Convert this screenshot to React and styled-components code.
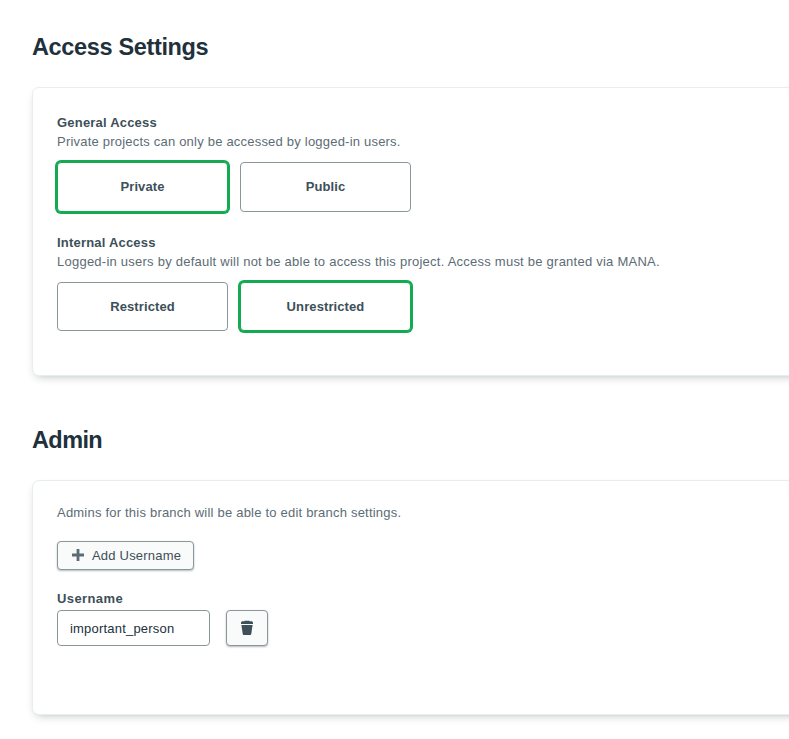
import React from "react";
import styled, { createGlobalStyle } from "styled-components";

const GlobalStyle = createGlobalStyle`
  * { box-sizing: border-box; }
  body {
    margin: 0;
    background: #fff;
    overflow: hidden;
    font-family: "Liberation Sans", Arial, sans-serif;
    font-size: 13px;
    color: #5c6c75;
  }
`;

const Page = styled.main`
  display: flex;
  flex-direction: column;
  height: 739px;
  padding: 32px 0 0 32px;
  overflow: hidden;
`;

const Title = styled.h2`
  margin: 0 0 25px;
  font-size: 23.5px;
  line-height: 30px;
  font-weight: 700;
  letter-spacing: ${(p) => p.$track || 0}px;
  color: #21313c;
  white-space: nowrap;
`;

const Card = styled.section`
  height: ${(p) => p.$height}px;
  flex: none;
  margin: 0 -24px ${(p) => p.$gap || 0}px 0;
  padding: 24px;
  padding-top: ${(p) => p.$top || 24}px;
  border: 1px solid #e7eeec;
  border-radius: 7px;
  background: #fff;
  box-shadow: 0 4px 10px -4px rgba(6, 22, 33, 0.3);
`;

const Label = styled.div`
  line-height: 20px;
  font-weight: 700;
  letter-spacing: ${(p) => p.$track || 0.2}px;
  color: #3d4f58;
`;

const Description = styled.p`
  margin: 0;
  line-height: 18px;
  letter-spacing: ${(p) => p.$track || 0.21}px;
  white-space: nowrap;
`;

const Options = styled.div`
  display: flex;
  gap: 12px;
  margin: 11px 0 21px;
`;

const Option = styled.button`
  width: 171px;
  height: ${(p) => p.$height}px;
  padding: 0 0 1px;
  border: 1px solid #89979b;
  border-radius: 4px;
  background: #fff;
  font: 700 13px "Liberation Sans", Arial, sans-serif;
  letter-spacing: 0.1px;
  color: #3d4f58;
  ${(p) => p.$selected && `
    border-color: #13aa52;
    box-shadow: 0 0 0 2px #13aa52;
  `}
`;

const Button = styled.button`
  display: flex;
  align-items: center;
  justify-content: center;
  gap: 8px;
  width: ${(p) => p.$width}px;
  height: ${(p) => p.$height}px;
  padding: 0;
  border: 1px solid #89979b;
  border-radius: 4px;
  background: #f9fbfa;
  box-shadow: 0 1px 2px rgba(6, 22, 33, 0.3);
  font: 13px "Liberation Sans", Arial, sans-serif;
  letter-spacing: 0.2px;
  color: #3d4f58;
`;

const AddButton = styled(Button)`
  justify-content: flex-start;
  padding: 0 0 1px 14px;
`;

const AddRow = styled.div`
  padding: 19px 0 19px;
`;

const FieldRow = styled.div`
  display: flex;
  gap: 16px;
  margin-top: 1px;
`;

const Input = styled.input`
  width: 153px;
  height: 36px;
  padding: 1px 12px 0;
  border: 1px solid #89979b;
  border-radius: 4px;
  background: #fff;
  font: 13px "Liberation Sans", Arial, sans-serif;
  letter-spacing: 0.2px;
  color: #21313c;
  outline: 0;
`;

const PlusIcon = () => (
  <svg width="12" height="12" viewBox="0 0 12 12" fill="#5c6c75">
    <path d="M4.6 0h2.8v4.6H12v2.8H7.4V12H4.6V7.4H0V4.6h4.6z" />
  </svg>
);

const TrashIcon = () => (
  <svg width="14" height="16" viewBox="0 0 14 16" fill="#3d4f58">
    <path d="M4.5 0.7h5v0.6h1.7c1.1 0 1.8.7 1.8 1.5V4H1V2.8c0-.8.7-1.5 1.8-1.5h1.7z" />
    <path d="M1.4 5h11.2l-1.3 8.7c-.1.8-.6 1.3-1.4 1.3H4.1c-.8 0-1.3-.5-1.4-1.3z" />
  </svg>
);

export default function App() {
  return (
    <>
      <GlobalStyle />
      <Page>
        <Title $track={-0.35}>Access Settings</Title>
        <Card $height={289} $gap={49} $top={25}>
          <Label>General Access</Label>
          <Description>Private projects can only be accessed by logged-in users.</Description>
          <Options>
            <Option $height={50} $selected>Private</Option>
            <Option $height={50}>Public</Option>
          </Options>
          <Label>Internal Access</Label>
          <Description $track={0.24}>
            Logged-in users by default will not be able to access this project. Access must be granted via MANA.
          </Description>
          <Options>
            <Option $height={49}>Restricted</Option>
            <Option $height={49} $selected>Unrestricted</Option>
          </Options>
        </Card>
        <Title $track={-0.6}>Admin</Title>
        <Card $height={235} $top={23}>
          <Description>Admins for this branch will be able to edit branch settings.</Description>
          <AddRow>
            <AddButton $width={137} $height={29}>
              <PlusIcon />
              <span>Add Username</span>
            </AddButton>
          </AddRow>
          <Label $track={0.4}>Username</Label>
          <FieldRow>
            <Input defaultValue="important_person" aria-label="Username" />
            <Button $width={42} $height={36} aria-label="Delete username">
              <TrashIcon />
            </Button>
          </FieldRow>
        </Card>
      </Page>
    </>
  );
}
